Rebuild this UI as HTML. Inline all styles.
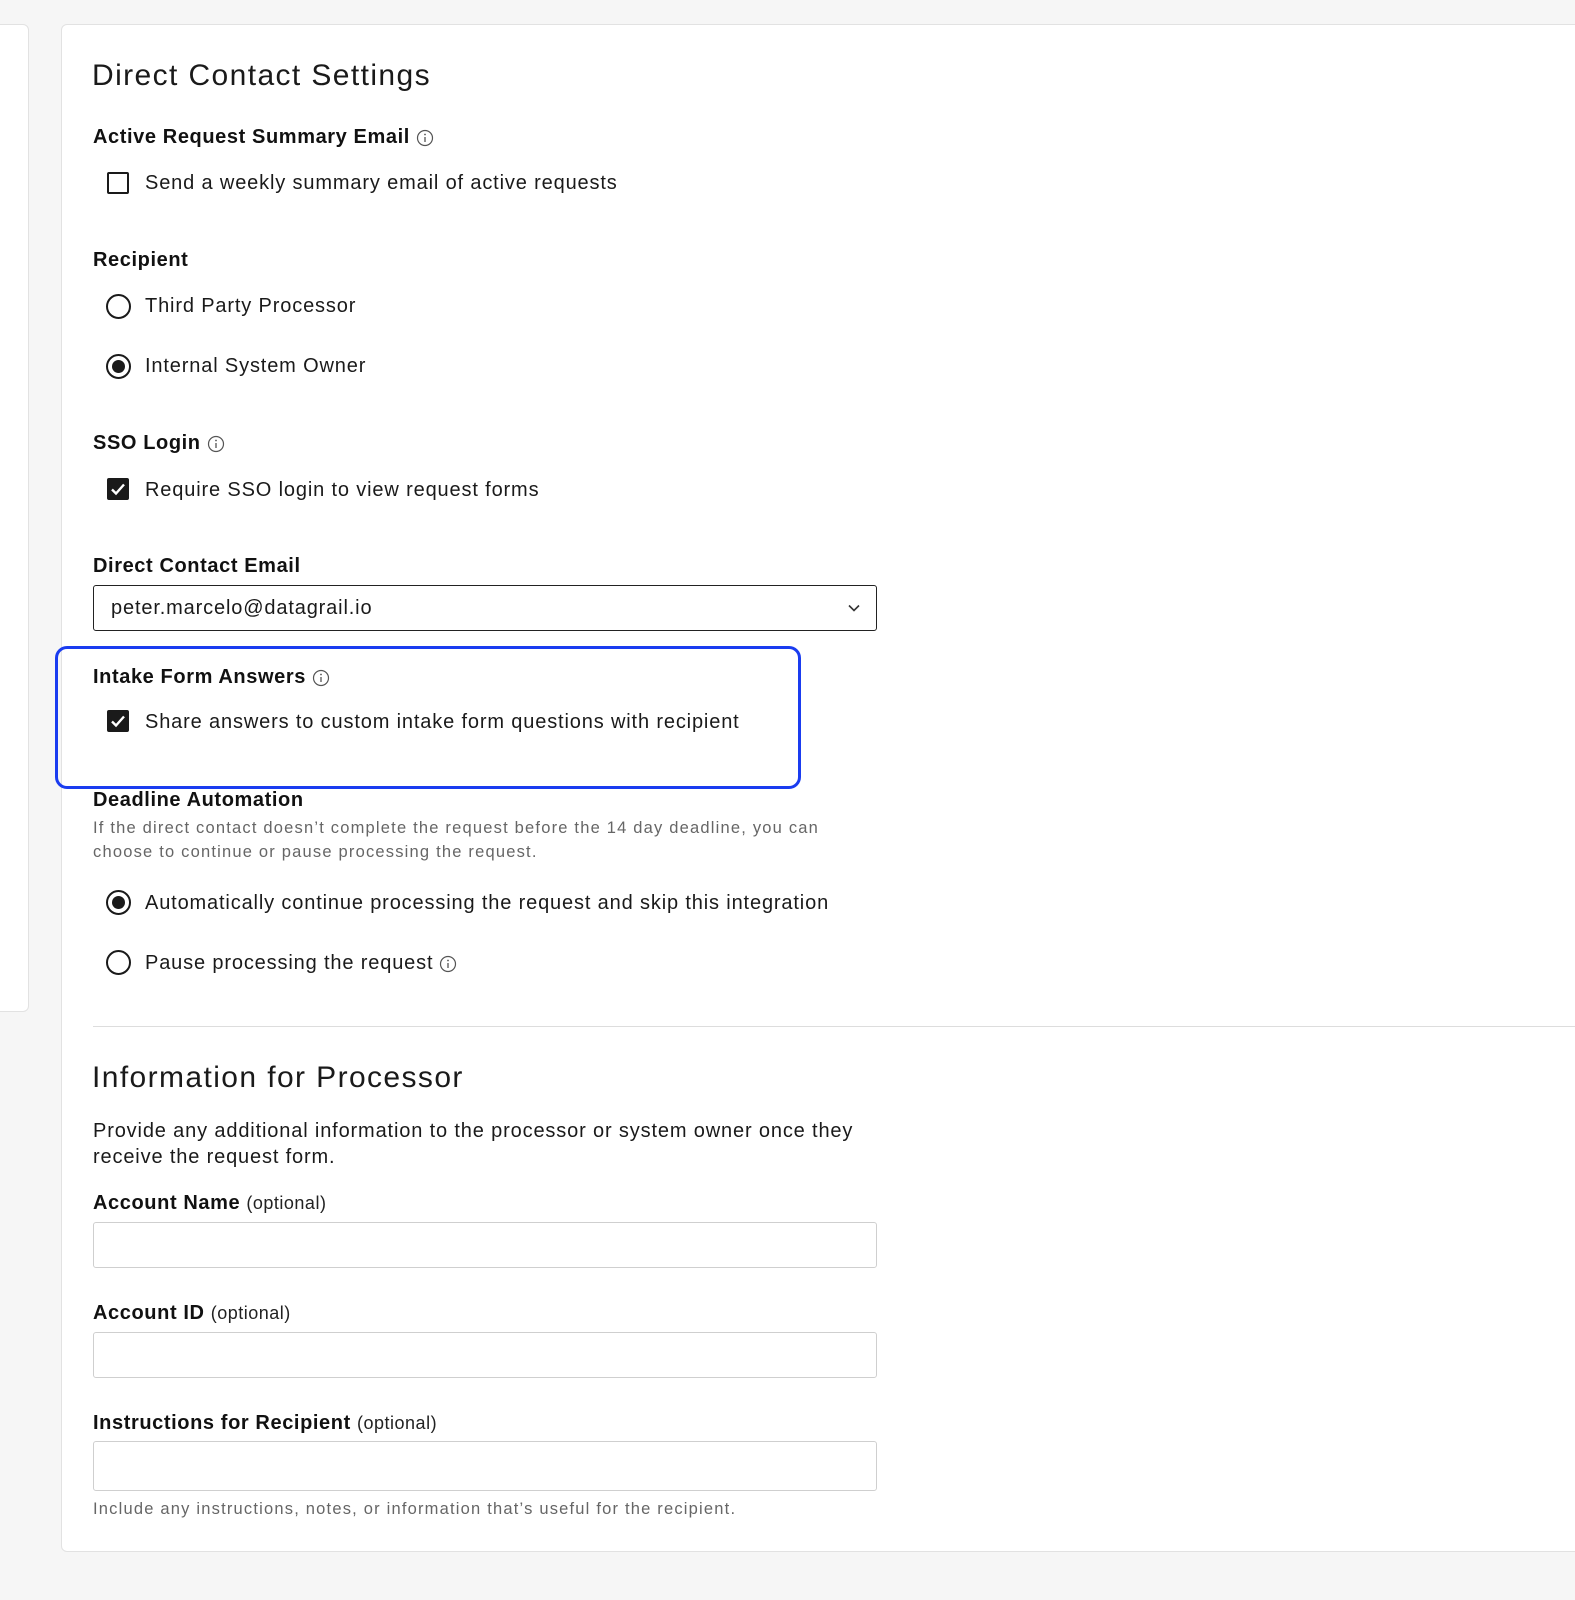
<!DOCTYPE html>
<html><head><meta charset="utf-8"><style>
*{margin:0;padding:0;box-sizing:border-box}
body{width:1575px;height:1600px;background:#f6f6f6;font-family:"Liberation Sans",sans-serif;color:#111;position:relative;overflow:hidden}
.a{position:absolute;white-space:nowrap}
.lp{position:absolute;left:-10px;top:24px;width:39px;height:988px;background:#fff;border:1px solid #e2e2e2;border-radius:6px}
.card{position:absolute;left:61px;top:24px;width:1530px;height:1528px;background:#fff;border:1px solid #e2e2e2;border-radius:6px}
.h1{font-size:30px;font-weight:300;color:#1a1a1a;letter-spacing:1.4px}
.lb{font-size:20px;font-weight:bold;color:#111;letter-spacing:0.6px}
.tx{font-size:20px;color:#1a1a1a;letter-spacing:0.85px}
.sm{font-size:16.5px;color:#666;letter-spacing:1.2px}
.cb{position:absolute;width:22px;height:22px;border:2px solid #1a1a1a;border-radius:2px;background:#fff}
.cb.on{background:#1a1a1a}
.rd{position:absolute;width:25px;height:25px;border:2px solid #1a1a1a;border-radius:50%}
.rd.on::after{content:"";position:absolute;left:4px;top:4px;width:13px;height:13px;border-radius:50%;background:#1a1a1a}
.inp{position:absolute;left:93px;width:784px;border:1.5px solid #cfcfcf;border-radius:3px;background:#fff}
.opt{font-weight:normal;font-size:18px;color:#222;letter-spacing:0.5px}
.i{display:inline-block;vertical-align:middle;margin-left:6px}
</style></head><body>
<div class="lp"></div>
<div class="card"></div>

<div class="a h1" style="left:92px;top:59px">Direct Contact Settings</div>

<div class="a lb" style="left:93px;top:126px">Active Request Summary Email<svg class="i" width="18" height="18" viewBox="0 0 18 18"><circle cx="9" cy="9" r="7.5" fill="none" stroke="#555" stroke-width="1.2"/><line x1="9" y1="8" x2="9" y2="13" stroke="#555" stroke-width="1.3"/><circle cx="9" cy="5.5" r="0.9" fill="#555"/></svg></div>
<div class="cb" style="left:107px;top:172px"></div>
<div class="a tx" style="left:145px;top:172px">Send a weekly summary email of active requests</div>

<div class="a lb" style="left:93px;top:249px">Recipient</div>
<div class="rd" style="left:106px;top:294px"></div>
<div class="a tx" style="left:145px;top:295px">Third Party Processor</div>
<div class="rd on" style="left:106px;top:354px"></div>
<div class="a tx" style="left:145px;top:355px">Internal System Owner</div>

<div class="a lb" style="left:93px;top:432px">SSO Login<svg class="i" width="18" height="18" viewBox="0 0 18 18"><circle cx="9" cy="9" r="7.5" fill="none" stroke="#555" stroke-width="1.2"/><line x1="9" y1="8" x2="9" y2="13" stroke="#555" stroke-width="1.3"/><circle cx="9" cy="5.5" r="0.9" fill="#555"/></svg></div>
<div class="cb on" style="left:107px;top:478px"><svg width="18" height="18" viewBox="0 0 18 18" style="position:absolute;left:0;top:0"><path d="M3 9.5l4 4 8-9" fill="none" stroke="#fff" stroke-width="2.4"/></svg></div>
<div class="a tx" style="left:145px;top:479px">Require SSO login to view request forms</div>

<div class="a lb" style="left:93px;top:555px">Direct Contact Email</div>
<div class="inp" style="top:585px;height:46px;border-color:#222"><span class="a tx" style="left:17px;top:11px">peter.marcelo@datagrail.io</span><svg class="a" style="left:753px;top:17px" width="14" height="10" viewBox="0 0 14 10"><path d="M2 2.5l5 5 5-5" fill="none" stroke="#333" stroke-width="1.6"/></svg></div>

<div class="a" style="left:55px;top:646px;width:746px;height:143px;border:3px solid #1a3cf0;border-radius:12px"></div>
<div class="a lb" style="left:93px;top:666px">Intake Form Answers<svg class="i" width="18" height="18" viewBox="0 0 18 18"><circle cx="9" cy="9" r="7.5" fill="none" stroke="#555" stroke-width="1.2"/><line x1="9" y1="8" x2="9" y2="13" stroke="#555" stroke-width="1.3"/><circle cx="9" cy="5.5" r="0.9" fill="#555"/></svg></div>
<div class="cb on" style="left:107px;top:710px"><svg width="18" height="18" viewBox="0 0 18 18" style="position:absolute;left:0;top:0"><path d="M3 9.5l4 4 8-9" fill="none" stroke="#fff" stroke-width="2.4"/></svg></div>
<div class="a tx" style="left:145px;top:711px">Share answers to custom intake form questions with recipient</div>

<div class="a lb" style="left:93px;top:789px">Deadline Automation</div>
<div class="a sm" style="left:93px;top:819px">If the direct contact doesn’t complete the request before the 14 day deadline, you can</div>
<div class="a sm" style="left:93px;top:843px">choose to continue or pause processing the request.</div>
<div class="rd on" style="left:106px;top:890px"></div>
<div class="a tx" style="left:145px;top:892px">Automatically continue processing the request and skip this integration</div>
<div class="rd" style="left:106px;top:950px"></div>
<div class="a tx" style="left:145px;top:952px">Pause processing the request<svg class="i" width="18" height="18" viewBox="0 0 18 18"><circle cx="9" cy="9" r="7.5" fill="none" stroke="#555" stroke-width="1.2"/><line x1="9" y1="8" x2="9" y2="13" stroke="#555" stroke-width="1.3"/><circle cx="9" cy="5.5" r="0.9" fill="#555"/></svg></div>

<div class="a" style="left:93px;top:1026px;width:1500px;height:1px;background:#ddd"></div>

<div class="a h1" style="left:92px;top:1061px">Information for Processor</div>
<div class="a tx" style="left:93px;top:1120px">Provide any additional information to the processor or system owner once they</div>
<div class="a tx" style="left:93px;top:1146px">receive the request form.</div>

<div class="a lb" style="left:93px;top:1192px">Account Name <span class="opt">(optional)</span></div>
<div class="inp" style="top:1222px;height:46px"></div>
<div class="a lb" style="left:93px;top:1302px">Account ID <span class="opt">(optional)</span></div>
<div class="inp" style="top:1332px;height:46px"></div>
<div class="a lb" style="left:93px;top:1412px">Instructions for Recipient <span class="opt">(optional)</span></div>
<div class="inp" style="top:1441px;height:50px"></div>
<div class="a sm" style="left:93px;top:1500px">Include any instructions, notes, or information that’s useful for the recipient.</div>
</body></html>
